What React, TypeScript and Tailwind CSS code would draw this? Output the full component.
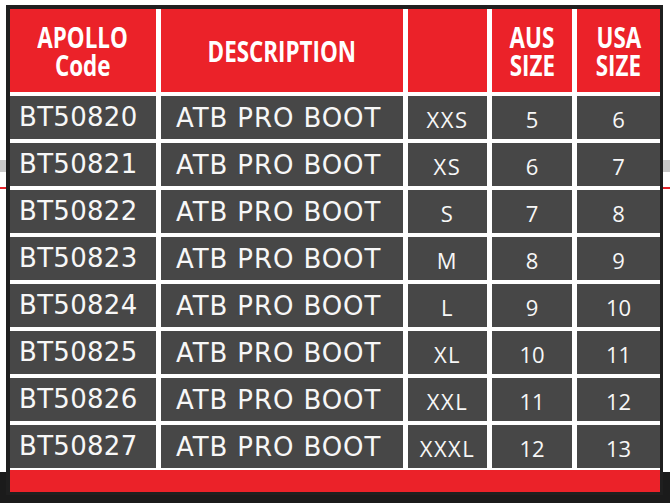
const rows = [
    { code: 'BT50820', size: 'XXS', aus: '5', usa: '6' },
    { code: 'BT50821', size: 'XS', aus: '6', usa: '7' },
    { code: 'BT50822', size: 'S', aus: '7', usa: '8' },
    { code: 'BT50823', size: 'M', aus: '8', usa: '9' },
    { code: 'BT50824', size: 'L', aus: '9', usa: '10' },
    { code: 'BT50825', size: 'XL', aus: '10', usa: '11' },
    { code: 'BT50826', size: 'XXL', aus: '11', usa: '12' },
    { code: 'BT50827', size: 'XXXL', aus: '12', usa: '13' },
];

const cols = 'grid grid-cols-[146px_242px_79px_80px_83px] gap-x-[5px]';
const headFont = "font-['Open_Sans',sans-serif] font-bold text-[28px] leading-[28px] text-white";
const bodyFont = "font-['DejaVu_Sans',sans-serif] text-[#f7f7f7]";
const sizeFont = "font-['Open_Sans',sans-serif] text-[22px] text-[#f7f7f7]";

function HeadCell({ lines }: { lines: string[] }) {
    return (
        <div className="bg-[#eb2229] flex flex-col items-center justify-center">
            {lines.map((l) => (
                <span key={l} className={`${headFont} inline-block scale-x-[0.8] whitespace-nowrap`}>
                    {l}
                </span>
            ))}
        </div>
    );
}

function SideStrip() {
    return (
        <div className="flex-1 flex flex-col">
            <div className="mt-[160px] h-[12px] bg-[#c9c9c9]" />
            <div className="mt-[15px] h-[2px] bg-[#e3232a]" />
        </div>
    );
}

export default function App() {
    return (
        <div className="w-[670px] h-[503px] flex items-start bg-[linear-gradient(to_bottom,#ffffff_472px,#1b1b1b_472px)]">
            <div className="w-[6px] self-stretch flex">
                <SideStrip />
            </div>

            {/* Table frame */}
            <div className="mt-[5px] w-[657px] bg-[#1f1f1f] pl-[4px] pt-[4px] pr-[3px] pb-[3px]">
                <div className="bg-white flex flex-col">
                    <div className={`${cols} grid-rows-[83px]`}>
                        <HeadCell lines={['APOLLO', 'Code']} />
                        <HeadCell lines={['DESCRIPTION']} />
                        <div className="bg-[#eb2229]" />
                        <HeadCell lines={['AUS', 'SIZE']} />
                        <HeadCell lines={['USA', 'SIZE']} />
                    </div>

                    <div className={`${cols} mt-[4px] auto-rows-[43px] gap-y-[4px]`}>
                        {rows.map((r) => (
                            <div key={r.code} className="contents">
                                <div className={`bg-[#474747] flex items-center pl-[9px] text-[26px] tracking-[0.3px] ${bodyFont}`}>
                                    {r.code}
                                </div>
                                <div className={`bg-[#474747] flex items-center pl-[15px] pt-[2px] text-[26px] tracking-[0.9px] ${bodyFont}`}>
                                    ATB PRO BOOT
                                </div>
                                <div className={`bg-[#474747] flex items-center justify-center pt-[4px] tracking-[1.5px] ${sizeFont}`}>
                                    {r.size}
                                </div>
                                <div className={`bg-[#474747] flex items-center justify-center pt-[4px] ${sizeFont}`}>
                                    {r.aus}
                                </div>
                                <div className={`bg-[#474747] flex items-center justify-center pt-[4px] ${sizeFont}`}>
                                    {r.usa}
                                </div>
                            </div>
                        ))}
                    </div>

                    <div className="mt-[2px] h-[22px] bg-[#eb2229]" />
                </div>
            </div>

            <div className="flex-1 self-stretch flex">
                <SideStrip />
            </div>
        </div>
    );
}
